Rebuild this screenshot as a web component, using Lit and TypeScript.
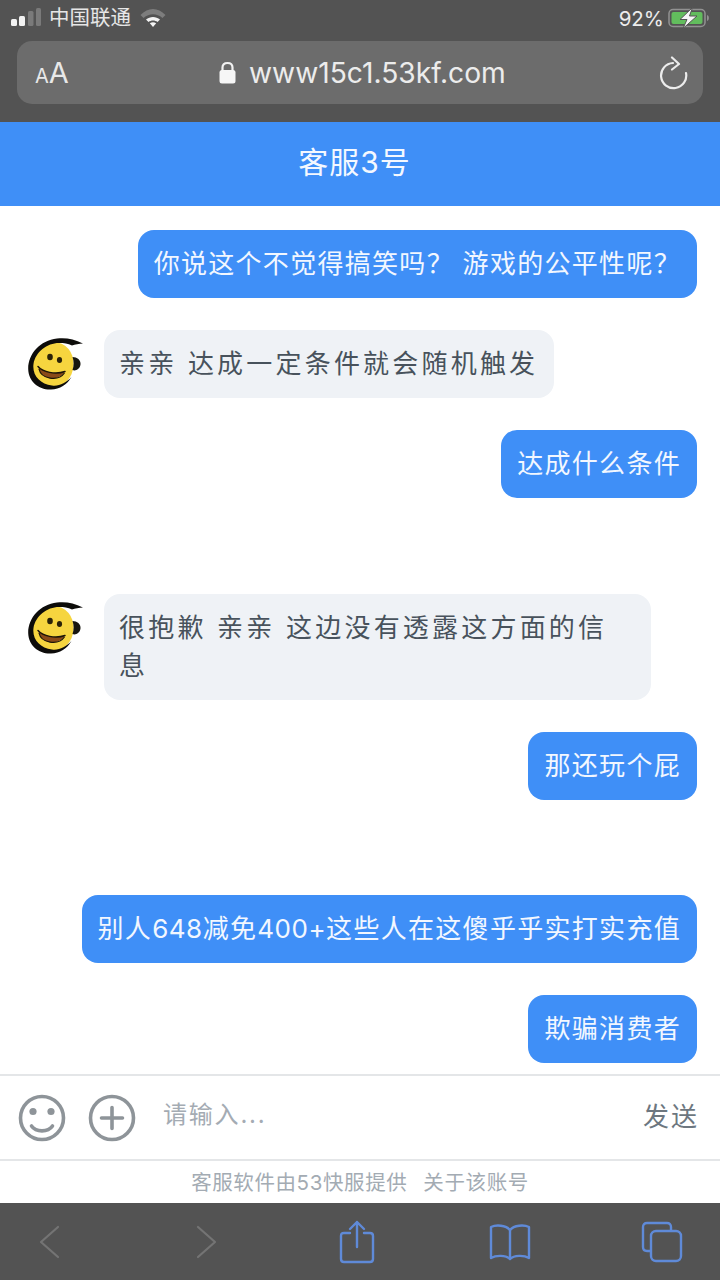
import { LitElement, css, html, svg, TemplateResult } from 'lit';
import { customElement } from 'lit/decorators.js';

type Msg = { me: boolean; text: string | TemplateResult; far?: boolean };

const MESSAGES: Msg[] = [
  { me: true, text: '你说这个不觉得搞笑吗？ 游戏的公平性呢？' },
  { me: false, text: '亲亲 达成一定条件就会随机触发' },
  { me: true, text: '达成什么条件' },
  { me: false, text: '很抱歉 亲亲 这边没有透露这方面的信息', far: true },
  { me: true, text: '那还玩个屁' },
  {
    me: true,
    text: html`别人<span class="num">648</span>减免<span class="num">400+</span>这些人在这傻乎乎实打实充值`,
    far: true,
  },
  { me: true, text: '欺骗消费者' },
];

const avatar = svg`
  <svg class="avatar" viewBox="0 0 56 54" width="56" height="54">
    <ellipse cx="25" cy="27" rx="20.500" ry="23" transform="rotate(12 25 27)" fill="#f6d53f"/>
    <path d="M55 5.500C46 1 38 -0.500 29 0.500C12 2.500 0 16 0.200 31C0.500 44 11 52 23 51.500C32 51 39 47 43.500 39C38 45 31 48.500 24 47.500C12 46 4 37 5.500 26C7.500 14 19 5 31 5C36 5 40 5.500 44 7.500C47 6.500 51 5.500 55 5.500Z" fill="#0d0c0a"/>
    <path d="M44.500 19C49 19 53 22 52.500 26.500C52 31 47.500 33.500 44.500 32C46 28 46 23 44.500 19Z" fill="#17160f"/>
    <ellipse cx="22" cy="19" rx="2.800" ry="3.200" fill="#2a2208"/>
    <ellipse cx="31.500" cy="22" rx="2.600" ry="3" fill="#2a2208"/>
    <path d="M10 28.500C15 34 27 37 37 33.500C33 42 14 45 10 28.500Z" fill="#8a4a18"/>
    <path d="M10 28.500C15 34 27 37 37 33.500" fill="none" stroke="#1a1408" stroke-width="1.500" stroke-linecap="round"/>
    <path d="M11 31C13 41 30 44 36.500 35" fill="none" stroke="#1a1408" stroke-width="1.200"/>
  </svg>
`;

@customElement('app-root')
export class AppRoot extends LitElement {
  static styles = css`
    :host {
      display: block;
      width: 720px;
      height: 1280px;
      font-family: 'Inter', 'Noto Sans CJK SC', 'Liberation Sans', sans-serif;
    }
    .page {
      height: 1280px;
      display: flex;
      flex-direction: column;
      background: #fff;
      overflow: hidden;
    }
    .chrome {
      height: 122px;
      box-sizing: border-box;
      flex: none;
      background: #535353;
      padding: 0 10px 0 11px;
      color: #f0f0f0;
    }
    .status {
      height: 41px;
      display: flex;
      align-items: center;
      padding-bottom: 5px;
      box-sizing: border-box;
      font-size: 20.500px;
    }
    .carrier {
      margin: 0 9px 0 8px;
      color: #e6e6e6;
      line-height: 26px;
    }
    .spacer {
      flex: 1;
    }
    .pct {
      font-size: 20.500px;
      margin-right: 4px;
      color: #ececec;
    }
    .url {
      height: 63px;
      margin: 0 7px 0 6px;
      border-radius: 15px;
      background: #6c6c6c;
      display: flex;
      align-items: center;
      padding: 0 15px 0 18px;
    }
    .aa {
      color: #e8e8e8;
      font-size: 29px;
      width: 184px;
      line-height: 1;
    }
    .aa small {
      font-size: 20px;
    }
    .addr {
      flex: 1;
      display: flex;
      align-items: center;
      gap: 13px;
      font-size: 28.200px;
      color: #ececec;
    }
    .header {
      height: 84px;
      flex: none;
      background: #3f8ff7;
      color: #f4f8ff;
      display: flex;
      align-items: center;
      justify-content: center;
      font-size: 30px;
      letter-spacing: 1px;
      padding: 0 11px 8px 0;
      box-sizing: border-box;
    }
    .chat {
      flex: 1;
      min-height: 0;
      overflow: hidden;
      box-sizing: border-box;
      padding: 24px 23px 0 28px;
      display: flex;
      flex-direction: column;
      gap: 32px;
    }
    .row {
      display: flex;
      flex: none;
    }
    .row.me {
      justify-content: flex-end;
    }
    .row.far {
      margin-top: 63.500px;
    }
    .avatar {
      flex: none;
      margin: 8px 20px 0 0;
    }
    .bubble {
      box-sizing: border-box;
      max-width: 547px;
      padding: 15px 16px 15px 15px;
      border-radius: 16px;
      font-size: 26px;
      line-height: 38px;
      letter-spacing: 3.200px;
      background: #eff2f6;
      color: #48525c;
    }
    .me .bubble {
      max-width: none;
      white-space: nowrap;
      padding: 15px 16px;
      background: #3f8ff7;
      color: #f2f7ff;
      letter-spacing: 1.300px;
    }
    .num {
      letter-spacing: 0.500px;
    }
    .input {
      height: 87px;
      flex: none;
      box-sizing: border-box;
      border-top: 2px solid #e4e6e8;
      border-bottom: 2px solid #e4e6e8;
      display: flex;
      align-items: center;
      padding: 0 21px 0 18px;
      gap: 22px;
    }
    .hint {
      flex: 1;
      margin-left: 5px;
      margin-bottom: 10px;
      font-size: 24px;
      letter-spacing: 1.800px;
      color: #a4abb3;
    }
    .send {
      font-size: 26px;
      letter-spacing: 2px;
      color: #6d7780;
      margin-bottom: 6px;
    }
    .credit {
      height: 42px;
      flex: none;
      display: flex;
      align-items: center;
      justify-content: center;
      gap: 16px;
      padding-bottom: 2px;
      box-sizing: border-box;
      font-size: 20.500px;
      letter-spacing: 0.600px;
      color: #a3abb3;
    }
    .toolbar {
      flex: none;
      height: 77px;
      background: #535353;
      display: grid;
      grid-template-columns: 156px 151px 152.500px 152.500px 44px;
      align-items: center;
      padding-left: 28px;
    }
    .tool {
      width: 44px;
      display: flex;
      justify-content: center;
    }
    svg {
      display: block;
      flex: none;
    }
  `;

  private renderSignal() {
    return html`<svg width="30" height="22" viewBox="0 0 30 22">
      <rect x="0" y="12" width="6" height="7" rx="1.500" fill="#f2f2f2"/>
      <rect x="8" y="9" width="6" height="10" rx="1.500" fill="#f2f2f2"/>
      <rect x="17" y="4" width="5.500" height="15" rx="1.500" fill="#7a7a7a"/>
      <rect x="25" y="1" width="5" height="18" rx="1.500" fill="#7a7a7a"/>
    </svg>`;
  }

  private renderWifi() {
    return html`<svg width="26" height="20" viewBox="0 0 26 20">
      <path d="M0.500 7C8 -1 18 -1 25.500 7L22.500 10C16.500 5 9.500 5 3.500 10Z" fill="#7d7d7d"/>
      <path d="M6 11.500C10 8 16 8 20 11.500L17.500 14C15 12 11 12 8.500 14Z" fill="#f4f4f4"/>
      <path d="M9.800 15.300C12 13.800 14 13.800 16.200 15.300L13 19Z" fill="#f4f4f4"/>
    </svg>`;
  }

  private renderBattery() {
    return html`<svg width="42" height="22" viewBox="0 0 42 22">
      <rect x="1" y="2.500" width="36" height="17" rx="4" fill="none" stroke="#929292" stroke-width="1.500"/>
      <rect x="3.500" y="5" width="31" height="12" rx="2" fill="#62bd5d"/>
      <path d="M39 8C41.500 8.500 41.500 13.500 39 14Z" fill="#929292"/>
      <path d="M24.500 0.500L12 12.500H19L15 21.500L29 9H21.500Z" fill="#f6f6f6" stroke="#535353" stroke-width="1"/>
    </svg>`;
  }

  private renderLock() {
    return html`<svg width="17" height="23" viewBox="0 0 17 23">
      <path d="M3.500 10V6.500C3.500 3.500 5.500 2 8.500 2S13.500 3.500 13.500 6.500V10" fill="none" stroke="#f2f2f2" stroke-width="2.200"/>
      <rect x="0.500" y="9" width="16" height="13.500" rx="2.500" fill="#f6f6f6"/>
    </svg>`;
  }

  private renderReload() {
    return html`<svg width="29" height="34" viewBox="0 0 29 34" fill="none" stroke="#ececec" stroke-width="2.200" stroke-linecap="round" stroke-linejoin="round">
      <path d="M14 7A12.600 12.600 0 1 0 27 17"/>
      <path d="M13 1.500L20 8L13 13.500"/>
    </svg>`;
  }

  private renderSmile() {
    return html`<svg width="48" height="48" viewBox="0 0 48 48" fill="none" stroke="#8e9499" stroke-width="3.600" stroke-linecap="round">
      <circle cx="24" cy="24" r="21.500"/>
      <circle cx="15" cy="17.500" r="3.600" fill="#8e9499" stroke="none"/>
      <circle cx="33" cy="17.500" r="3.600" fill="#8e9499" stroke="none"/>
      <path d="M13.500 32C18 38.500 30 38.500 34.500 32"/>
    </svg>`;
  }

  private renderPlus() {
    return html`<svg width="48" height="48" viewBox="0 0 48 48" fill="none" stroke="#8e9499" stroke-width="3.600" stroke-linecap="round">
      <circle cx="24" cy="24" r="21.500"/>
      <path d="M13.500 24H34.500M24 13.500V34.500"/>
    </svg>`;
  }

  private renderToolbar() {
    return html`<div class="toolbar">
      <div class="tool">
        <svg width="24" height="36" viewBox="0 0 24 36" fill="none" stroke="#747474" stroke-width="2.200" stroke-linecap="round" stroke-linejoin="round">
          <path d="M20 3L3 18L20 33"/>
        </svg>
      </div>
      <div class="tool">
        <svg width="24" height="36" viewBox="0 0 24 36" fill="none" stroke="#747474" stroke-width="2.200" stroke-linecap="round" stroke-linejoin="round">
          <path d="M4 3L21 18L4 33"/>
        </svg>
      </div>
      <div class="tool">
        <svg width="36" height="44" viewBox="0 0 36 44" fill="none" stroke="#5f8ad8" stroke-width="2.400" stroke-linecap="round" stroke-linejoin="round">
          <path d="M11 13H5C3 13 2 14 2 16V39C2 41 3 42 5 42H31C33 42 34 41 34 39V16C34 14 33 13 31 13H25"/>
          <path d="M18 27V2M11 9L18 2L25 9"/>
        </svg>
      </div>
      <div class="tool">
        <svg width="44" height="38" viewBox="0 0 44 38" fill="none" stroke="#5f8ad8" stroke-width="2.400" stroke-linecap="round" stroke-linejoin="round">
          <path d="M22 7C18 2 8 1.500 3 4V35C8 32 18 32 22 36C26 32 36 32 41 35V4C36 1.500 26 2 22 7Z"/>
          <path d="M22 7V36"/>
        </svg>
      </div>
      <div class="tool">
        <svg width="42" height="42" viewBox="0 0 42 42" fill="none" stroke="#5f8ad8" stroke-width="2.400" stroke-linejoin="round">
          <path d="M30 9V6C30 3.500 28.500 2 26 2H6C3.500 2 2 3.500 2 6V26C2 28.500 3.500 30 6 30H9"/>
          <rect x="10" y="10" width="30" height="30" rx="5"/>
        </svg>
      </div>
    </div>`;
  }

  render() {
    return html`
      <div class="page">
        <div class="chrome">
          <div class="status">
            ${this.renderSignal()}
            <span class="carrier">中国联通</span>
            ${this.renderWifi()}
            <span class="spacer"></span>
            <span class="pct">92%</span>
            ${this.renderBattery()}
          </div>
          <div class="url">
            <span class="aa"><small>A</small>A</span>
            <span class="addr">${this.renderLock()}www15c1.53kf.com</span>
            ${this.renderReload()}
          </div>
        </div>
        <div class="header">客服3号</div>
        <div class="chat">
          ${MESSAGES.map(
            (m) => html`<div class="row ${m.me ? 'me' : ''} ${m.far ? 'far' : ''}">
              ${m.me ? '' : avatar}
              <div class="bubble">${m.text}</div>
            </div>`
          )}
        </div>
        <div class="input">
          ${this.renderSmile()} ${this.renderPlus()}
          <span class="hint">请输入...</span>
          <span class="send">发送</span>
        </div>
        <div class="credit"><span>客服软件由53快服提供</span><span>关于该账号</span></div>
        ${this.renderToolbar()}
      </div>
    `;
  }
}
